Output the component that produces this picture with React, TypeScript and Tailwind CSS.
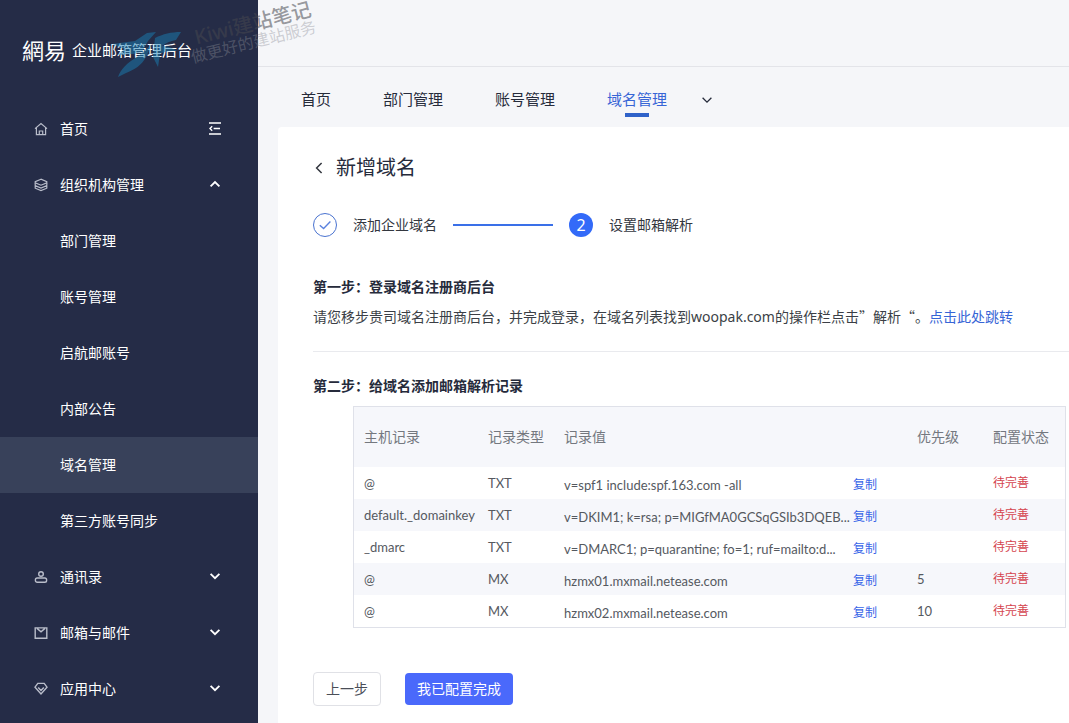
import type { ReactNode } from 'react';

type NavItem = { label: string; icon?: ReactNode; trailing?: 'fold' | 'up' | 'down'; active?: boolean };

const iconProps = {
  width: 14,
  height: 14,
  viewBox: '0 0 14 14',
  fill: 'none',
  stroke: 'currentColor',
  strokeWidth: 1.2,
  'aria-hidden': true,
};

const HomeIcon = () => (
  <svg {...iconProps}>
    <path d="M1 6.6 7 1.6l6 5M2.4 5.6v7.1h9.2V5.6M5.3 12.7V9h3.4v3.7" />
  </svg>
);

const LayersIcon = () => (
  <svg {...iconProps}>
    <path d="M7 1.2 1.2 3.6v1.2L7 7.2l5.8-2.4V3.6L7 1.2Z" />
    <path d="M1.2 5v2.6L7 10l5.8-2.4V5M1.2 7.6v2.6L7 12.6l5.8-2.4V7.6" />
  </svg>
);

const ContactIcon = () => (
  <svg {...iconProps} strokeWidth={1.4}>
    <circle cx="7" cy="4" r="2.3" />
    <rect x="1.4" y="8" width="11.2" height="4.2" rx="1.8" />
  </svg>
);

const MailIcon = () => (
  <svg {...iconProps} strokeWidth={1.4}>
    <path d="M1.2 1.9h11.6v10.4H1.2zM3 2.4 7 5.8l4-3.4" />
  </svg>
);

const GemIcon = () => (
  <svg {...iconProps} strokeWidth={1.4}>
    <path d="M3.8 1.4h6.4L13 5.2 7 12 1 5.2l2.8-3.8ZM4.2 5.6 7 8.4l2.8-2.8" />
  </svg>
);

const FoldIcon = () => (
  <svg {...iconProps} strokeWidth={1.4}>
    <path d="M1 1h12M5.6 6.5H12M1 12h12M4.2 4.3 2 6.5l2.2 2.2" />
  </svg>
);

const Chevron = ({ d, strokeWidth = 1.8 }: { d: string; strokeWidth?: number }) => (
  <svg {...iconProps} strokeWidth={strokeWidth}>
    <path d={d} />
  </svg>
);

const CHEVRON_UP = 'M2.6 8.4 7 4l4.4 4.4';
const CHEVRON_DOWN = 'M2.6 3.8 7 8.2l4.4-4.4';

const navItems: NavItem[] = [
  { label: '首页', icon: <HomeIcon />, trailing: 'fold' },
  { label: '组织机构管理', icon: <LayersIcon />, trailing: 'up' },
  { label: '部门管理' },
  { label: '账号管理' },
  { label: '启航邮账号' },
  { label: '内部公告' },
  { label: '域名管理', active: true },
  { label: '第三方账号同步' },
  { label: '通讯录', icon: <ContactIcon />, trailing: 'down' },
  { label: '邮箱与邮件', icon: <MailIcon />, trailing: 'down' },
  { label: '应用中心', icon: <GemIcon />, trailing: 'down' },
];

const tabs = ['首页', '部门管理', '账号管理', '域名管理'];

const records = [
  { host: '@', type: 'TXT', value: 'v=spf1 include:spf.163.com -all', priority: '' },
  { host: 'default._domainkey', type: 'TXT', value: 'v=DKIM1; k=rsa; p=MIGfMA0GCSqGSIb3DQEB...', priority: '' },
  { host: '_dmarc', type: 'TXT', value: 'v=DMARC1; p=quarantine; fo=1; ruf=mailto:d...', priority: '' },
  { host: '@', type: 'MX', value: 'hzmx01.mxmail.netease.com', priority: '5' },
  { host: '@', type: 'MX', value: 'hzmx02.mxmail.netease.com', priority: '10' },
];

function Sidebar() {
  return (
    <aside className="w-[258px] shrink-0 bg-[#252c47] text-white">
      <div className="flex h-[101px] items-center gap-[6px] pl-[22px]">
        <span className="text-[22px]">網易</span>
        <span className="text-[15px]">企业邮箱管理后台</span>
      </div>
      <nav>
        {navItems.map((item) => (
          <a
            key={item.label}
            href="#"
            className={`flex h-14 items-center pl-[34px] pr-9 text-sm ${item.active ? 'bg-[#38415a]' : ''}`}
          >
            <span className="w-[26px] text-[#b9bdca]">{item.icon}</span>
            <span className="flex-1">{item.label}</span>
            {item.trailing === 'fold' && <FoldIcon />}
            {item.trailing === 'up' && <Chevron d={CHEVRON_UP} />}
            {item.trailing === 'down' && <Chevron d={CHEVRON_DOWN} />}
          </a>
        ))}
      </nav>
    </aside>
  );
}

function TabBar() {
  return (
    <nav className="flex h-[60px] items-center pl-[43px] pt-1 text-[15px] text-[#262b3b]">
      {tabs.map((tab) => {
        const current = tab === '域名管理';
        return (
          <a key={tab} href="#" className={`relative mr-[52px] last-of-type:mr-0 ${current ? 'text-[#3765d6]' : ''}`}>
            {tab}
            {current && <span className="absolute -bottom-[7px] left-1/2 h-1 w-6 -translate-x-1/2 bg-[#2f62c9]" />}
          </a>
        );
      })}
      <button type="button" aria-label="更多" className="ml-[33px] pt-1">
        <Chevron d={CHEVRON_DOWN} strokeWidth={1.3} />
      </button>
    </nav>
  );
}

function Steps() {
  return (
    <ol className="mt-[25px] flex h-6 items-center text-sm text-[#33373f]">
      <li className="flex items-center">
        <span className="flex size-6 items-center justify-center rounded-full border border-[#4a73d0] text-[#5b82de]">
          <svg {...iconProps} strokeWidth={1.4}>
            <path d="M1.8 7.2 5.6 10.6l6.8-7" />
          </svg>
        </span>
        <span className="ml-4">添加企业域名</span>
      </li>
      <li className="flex items-center">
        <span className="mx-4 h-[2px] w-[100px] bg-[#3a70e8]" />
        <span className="flex size-6 items-center justify-center rounded-full bg-[#336af8] text-base leading-6 text-white">2</span>
        <span className="ml-4">设置邮箱解析</span>
      </li>
    </ol>
  );
}

function RecordTable() {
  return (
    <div className="ml-10 mr-[3px] mt-[10px] border border-[#dfe1e9]">
      <table className="w-full table-fixed text-left font-['Lato','Noto_Sans_CJK_SC',sans-serif] text-[13px] leading-5 text-[#55595f]">
        <colgroup>
          <col className="w-[124px]" />
          <col className="w-[76px]" />
          <col />
          <col className="w-[76px]" />
          <col className="w-[82px]" />
        </colgroup>
        <thead>
          <tr className="h-[60px] bg-[#f6f7fb] text-sm text-[#74787f]">
            <th className="px-[10px] font-normal">主机记录</th>
            <th className="px-[10px] font-normal">记录类型</th>
            <th className="px-[10px] font-normal">记录值</th>
            <th className="px-[10px] font-normal">优先级</th>
            <th className="px-[10px] font-normal">配置状态</th>
          </tr>
        </thead>
        <tbody>
          {records.map((record, i) => (
            <tr key={i} className="h-8 even:bg-[#f6f7fb]">
              <td className="whitespace-nowrap px-[10px]">{record.host}</td>
              <td className="px-[10px]">{record.type}</td>
              <td className="px-[10px]">
                <div className="flex items-center pt-[3px]">
                  <span className="w-[289px] whitespace-nowrap">{record.value}</span>
                  <button type="button" className="text-xs leading-5 text-[#3765e8]">
                    复制
                  </button>
                </div>
              </td>
              <td className="px-[10px]">{record.priority}</td>
              <td className="px-[10px] text-xs text-[#d5454f]">待完善</td>
            </tr>
          ))}
        </tbody>
      </table>
    </div>
  );
}

function Watermark() {
  return (
    <div className="pointer-events-none absolute left-[105px] top-0 h-20 w-[225px] select-none" aria-hidden="true">
      <svg className="absolute left-0 top-5" width="80" height="60" viewBox="0 0 80 60" fill="#1a7fb4" opacity="0.5">
        <path d="M7 24 30 21l12-8 9-1-8 9-6 11-9 2-15 1 6-6Z" />
        <path d="M13 57c3-8 9-14 19-20l15-13-6 13c-4 8-12 13-20 16Z" />
        <path d="M50 18c8-4 16-6 26-6l-5 8c-6 1-10 3-14 6 6 0 11 2 15 5-7 0-12 0-17 3l-2 13-5-10 1-10Z" />
      </svg>
      <div className="absolute left-[82px] top-[14px] -rotate-14 whitespace-nowrap">
        <p className="pl-2 text-[20px] font-medium leading-5 text-[#45474f]/55">Kiwi建站笔记</p>
        <p className="text-[16px] leading-4 text-[#8b8d96]/40">做更好的建站服务</p>
      </div>
    </div>
  );
}

export default function App() {
  return (
    <div
      lang="zh-CN"
      className="relative flex min-h-screen bg-[#f5f6f9] font-['Noto_Sans','Noto_Sans_CJK_SC',sans-serif]"
    >
      <Sidebar />
      <div className="flex min-w-0 flex-1 flex-col">
        <header className="h-[67px] border-b border-[#e3e4e9]" />
        <TabBar />
        <main className="ml-5 flex-1 rounded-tl bg-white pl-[35px] pt-[21px]">
          <div className="flex h-10 items-center gap-[10px]">
            <button type="button" aria-label="返回" className="-ml-px text-[#33373f]">
              <Chevron d="M9.6 2 4.6 7l5 5" strokeWidth={1.5} />
            </button>
            <h1 className="text-xl text-[#262b3b]">新增域名</h1>
          </div>
          <Steps />

          <section className="mt-[40px] border-b border-[#e9eaee] pb-6 text-sm leading-5">
            <h2 className="font-bold text-[#262b3b]">第一步：登录域名注册商后台</h2>
            <p className="mt-[9px] whitespace-nowrap text-[#3b3f46]">
              请您移步贵司域名注册商后台，并完成登录，在域名列表找到woopak.com的操作栏点击
              <span className="font-['Noto_Sans_CJK_SC',sans-serif]">”解析“</span>。
              <a href="#" className="text-[#3765d6]">
                点击此处跳转
              </a>
            </p>
          </section>

          <section className="mt-6 text-sm leading-5">
            <h2 className="font-bold text-[#262b3b]">第二步：给域名添加邮箱解析记录</h2>
            <RecordTable />
          </section>

          <div className="mt-11 flex items-center gap-6 pb-4 text-sm">
            <button type="button" className="h-[34px] w-[68px] rounded border border-[#e0e1e6] text-[#4a4e57]">
              上一步
            </button>
            <button type="button" className="h-8 w-[108px] rounded bg-[#4a69fb] text-white">
              我已配置完成
            </button>
          </div>
        </main>
      </div>
      <Watermark />
    </div>
  );
}
